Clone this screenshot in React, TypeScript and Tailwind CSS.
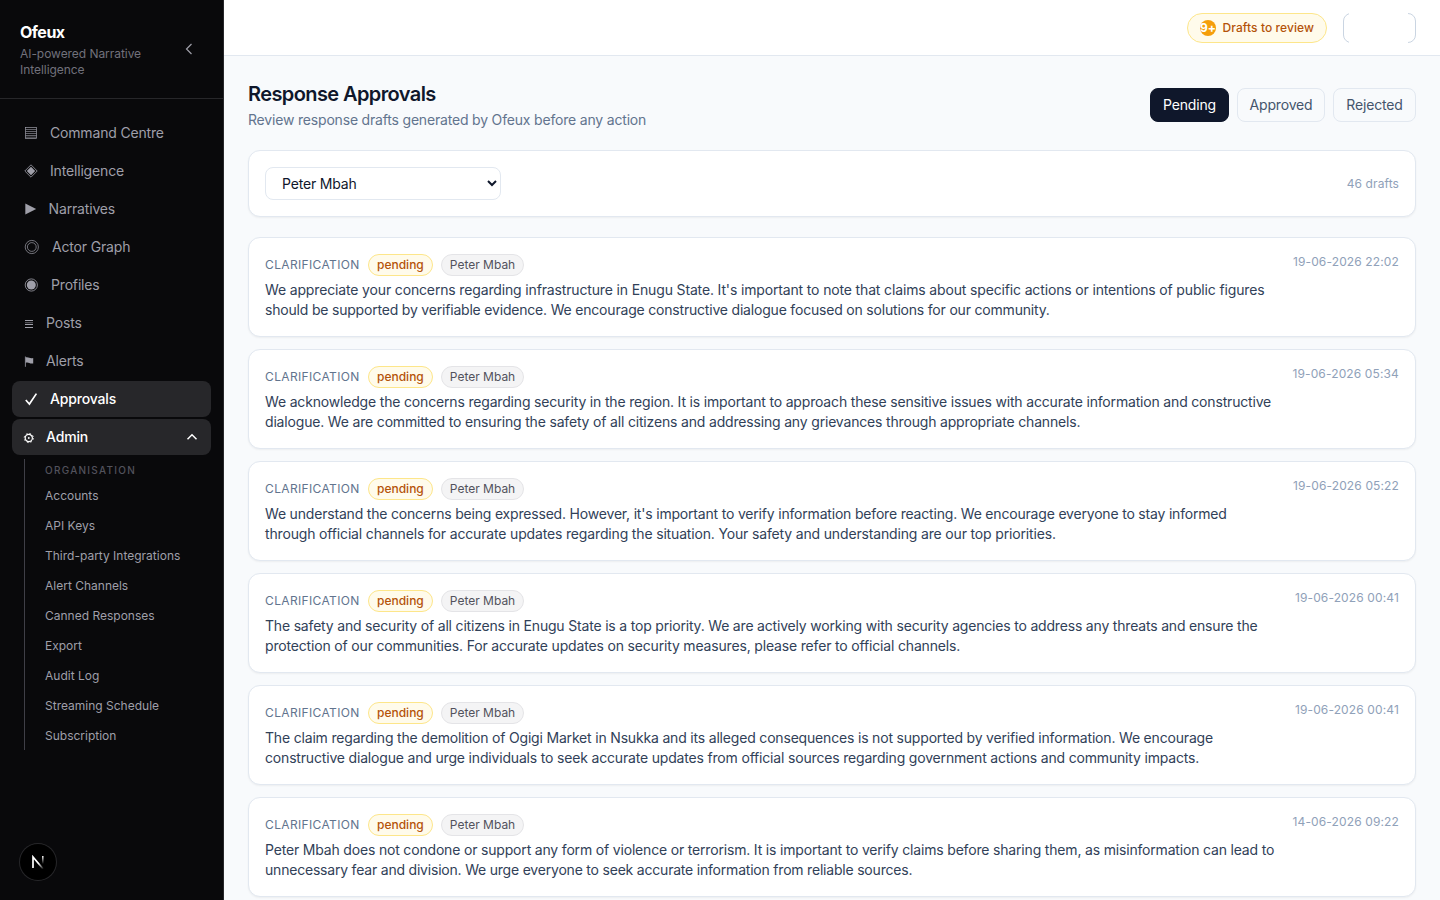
import type { ReactNode } from "react";

const navItems: { label: string; icon: ReactNode; active?: boolean }[] = [
  {
    label: "Command Centre",
    icon: (
      <svg width="14" height="14" viewBox="0 0 14 14" fill="none" stroke="currentColor">
        <rect x="1.5" y="1.5" width="11" height="11" strokeWidth="0.7" />
        <path d="M1.5 3.5h11M1.5 5.5h11M1.5 7.5h11M1.5 9.5h11M1.5 11.2h11" strokeWidth="0.6" />
      </svg>
    ),
  },
  {
    label: "Intelligence",
    icon: (
      <svg width="14" height="14" viewBox="0 0 14 14">
        <path d="M7 .8 13.2 7 7 13.2.8 7z" fill="none" stroke="currentColor" strokeWidth="0.8" />
        <path d="M7 2.8 11.2 7 7 11.2 2.8 7z" fill="currentColor" />
      </svg>
    ),
  },
  {
    label: "Narratives",
    icon: (
      <svg width="12.6" height="14" viewBox="0 0 12.6 14">
        <path d="M1.3 1.5 12.2 7 1.3 12.5z" fill="currentColor" />
      </svg>
    ),
  },
  {
    label: "Actor Graph",
    icon: (
      <svg width="16" height="16" viewBox="0 0 16 16" fill="none" stroke="currentColor" strokeWidth="0.7">
        <circle cx="7.8" cy="8" r="6.6" />
        <circle cx="7.8" cy="8" r="4.4" />
      </svg>
    ),
  },
  {
    label: "Profiles",
    icon: (
      <svg width="15" height="14" viewBox="0 0 15 14">
        <circle cx="7.3" cy="7" r="6.1" fill="none" stroke="currentColor" strokeWidth="0.8" />
        <circle cx="7.3" cy="7" r="4.5" fill="currentColor" />
      </svg>
    ),
  },
  {
    label: "Posts",
    icon: (
      <svg width="10" height="14" viewBox="0 0 10 14" stroke="currentColor">
        <path d="M1 4.5h8M1 8.5h8M1 11.5h8" strokeWidth="1" />
        <path d="M1 6.7h8" strokeWidth="0.6" />
      </svg>
    ),
  },
  {
    label: "Alerts",
    icon: (
      <svg width="10" height="14" viewBox="0 0 10 14">
        <path d="M1.4 2.5v10.3" stroke="currentColor" strokeWidth="0.8" />
        <path d="M1.6 3.3c1.6-.4 2.600 0 3.700.5 1.200.5 2.300.5 3.900.2v5.400c-1.500.3-2.700.2-3.900-.4-1.100-.5-2.100-.7-3.700-.3z" fill="currentColor" />
      </svg>
    ),
  },
  {
    label: "Approvals",
    active: true,
    icon: (
      <svg width="14" height="14" viewBox="0 0 14 14" fill="none" stroke="currentColor">
        <path d="M1.8 8 5.4 12 12.400 1.600" strokeWidth="1.700" />
      </svg>
    ),
  },
];

const adminItems = [
  "Accounts",
  "API Keys",
  "Third-party Integrations",
  "Alert Channels",
  "Canned Responses",
  "Export",
  "Audit Log",
  "Streaming Schedule",
  "Subscription",
];

const drafts = [
  {
    date: "19-06-2026 22:02",
    lines: [
      { text: "We appreciate your concerns regarding infrastructure in Enugu State. It's important to note that claims about specific actions or intentions of public figures", spacing: "tracking-[-0.15px]" },
      { text: "should be supported by verifiable evidence. We encourage constructive dialogue focused on solutions for our community.", spacing: "tracking-[-0.195px]" },
    ],
  },
  {
    date: "19-06-2026 05:34",
    lines: [
      { text: "We acknowledge the concerns regarding security in the region. It is important to approach these sensitive issues with accurate information and constructive", spacing: "tracking-[-0.175px]" },
      { text: "dialogue. We are committed to ensuring the safety of all citizens and addressing any grievances through appropriate channels.", spacing: "tracking-[-0.175px]" },
    ],
  },
  {
    date: "19-06-2026 05:22",
    lines: [
      { text: "We understand the concerns being expressed. However, it's important to verify information before reacting. We encourage everyone to stay informed", spacing: "tracking-[-0.19px]" },
      { text: "through official channels for accurate updates regarding the situation. Your safety and understanding are our top priorities.", spacing: "tracking-[-0.16px]" },
    ],
  },
  {
    date: "19-06-2026 00:41",
    lines: [
      { text: "The safety and security of all citizens in Enugu State is a top priority. We are actively working with security agencies to address any threats and ensure the", spacing: "tracking-[-0.187px]" },
      { text: "protection of our communities. For accurate updates on security measures, please refer to official channels.", spacing: "tracking-[-0.17px]" },
    ],
  },
  {
    date: "19-06-2026 00:41",
    lines: [
      { text: "The claim regarding the demolition of Ogigi Market in Nsukka and its alleged consequences is not supported by verified information. We encourage", spacing: "tracking-[-0.183px]" },
      { text: "constructive dialogue and urge individuals to seek accurate updates from official sources regarding government actions and community impacts.", spacing: "tracking-[-0.177px]" },
    ],
  },
  {
    date: "14-06-2026 09:22",
    lines: [
      { text: "Peter Mbah does not condone or support any form of violence or terrorism. It is important to verify claims before sharing them, as misinformation can lead to", spacing: "tracking-[-0.178px]" },
      { text: "unnecessary fear and division. We urge everyone to seek accurate information from reliable sources.", spacing: "tracking-[-0.205px]" },
    ],
  },
];

const Sidebar = () => {
  return (
    <aside className="relative w-56 shrink-0 bg-[#09090b] border-r border-zinc-800">
      <div className="flex items-center justify-between border-b border-zinc-800 p-5">
        <div className="w-36">
          <p className="text-base font-bold tracking-[-0.5px] text-white">Ofeux</p>
          <p className="mt-0.5 text-xs tracking-[-0.05px] text-zinc-500">
            AI-powered Narrative
            <br />
            Intelligence
          </p>
        </div>
        <svg className="mr-[7px] text-zinc-400" width="14" height="14" viewBox="0 0 14 14" fill="none" stroke="currentColor" strokeWidth="1.2">
          <path d="M9.500 2 4.500 7l5 5" />
        </svg>
      </div>
      <nav className="flex flex-col gap-0.5 px-3 pt-4 tracking-[-0.17px]">
        {navItems.map((item) => (
          <a
            key={item.label}
            className={
              item.active
                ? "flex h-9 items-center gap-3 rounded-lg bg-zinc-800 px-3 text-sm font-medium text-white"
                : "flex h-9 items-center gap-3 rounded-lg px-3 text-sm text-zinc-400"
            }
          >
            {item.icon}
            {item.label}
          </a>
        ))}
        <a className="flex h-9 items-center gap-3 rounded-lg bg-zinc-800 px-3 text-sm font-medium text-white">
          <svg width="10" height="14" viewBox="0 0 10 14" fill="none" stroke="currentColor" overflow="visible">
            <circle cx="4.800" cy="8" r="3.600" strokeWidth="1.200" />
            <circle cx="4.800" cy="8" r="4.600" strokeWidth="0.800" strokeDasharray="1.800 1.812" />
            <circle cx="4.800" cy="8" r="0.900" fill="currentColor" stroke="none" />
          </svg>
          <span className="flex-1">Admin</span>
          <svg width="14" height="14" viewBox="0 0 14 14" fill="none" stroke="currentColor" strokeWidth="1.500">
            <path d="M2.500 9.200 7 4.800l4.500 4.400" />
          </svg>
        </a>
        <div className="ml-3 mt-0.5 flex flex-col gap-0.5 border-l border-zinc-700 pl-5">
          <p className="h-[21px] pt-1 text-[10px] font-medium leading-[15px] tracking-[1.270px] text-zinc-600">
            ORGANISATION
          </p>
          {adminItems.map((item) => (
            <a key={item} className="py-1.5 text-xs tracking-normal text-zinc-400">
              {item}
            </a>
          ))}
        </div>
      </nav>
      {/* dev tools badge */}
      <div className="absolute bottom-5 left-5 flex size-9 items-center justify-center rounded-full bg-black shadow-[0_0_0_1px_#27272a]">
        <svg width="14" height="14" viewBox="0 0 14 14" fill="none">
          <defs>
            <linearGradient id="stem" x1="0" y1="1" x2="0" y2="9" gradientUnits="userSpaceOnUse">
              <stop stopColor="#fff" />
              <stop offset="1" stopColor="#fff" stopOpacity="0" />
            </linearGradient>
            <linearGradient id="slash" x1="8" y1="8" x2="12.500" y2="14" gradientUnits="userSpaceOnUse">
              <stop stopColor="#fff" />
              <stop offset="1" stopColor="#fff" stopOpacity="0" />
            </linearGradient>
          </defs>
          <path d="M2 13V2L12.200 14" stroke="url(#slash)" strokeWidth="1.700" />
          <path d="M11.800 1v8.500" stroke="url(#stem)" strokeWidth="1.500" />
        </svg>
      </div>
    </aside>
  );
};

const App = () => {
  return (
    <div className="flex h-screen overflow-hidden bg-slate-50 font-['Inter',sans-serif]">
      <Sidebar />
      <div className="flex min-w-0 flex-1 flex-col">
        <header className="flex h-14 shrink-0 items-center justify-end gap-4 border-b border-slate-200 bg-white px-6">
          <div className="flex h-[30px] w-[140px] items-center gap-[6.5px] whitespace-nowrap rounded-full border border-[#fde68a] bg-[#fffbeb] px-3 text-xs font-medium tracking-[0.08px] text-[#b45309]">
            <span className="flex size-4 shrink-0 items-center justify-center rounded-full bg-[#f59e0b] font-bold text-white">
              9+
            </span>
            Drafts to review
          </div>
          <div className="relative h-[30px] w-[73px] rounded-lg border border-slate-300">
            <div className="absolute -inset-y-px left-[5px] right-[7px] bg-white" />
          </div>
        </header>
        <main className="flex flex-1 flex-col gap-5 p-6">
          <div className="flex items-center justify-between">
            <div>
              <h1 className="text-xl font-semibold tracking-[-0.6px] text-slate-900">Response Approvals</h1>
              <p className="mt-0.5 text-sm tracking-[-0.185px] text-slate-500">
                Review response drafts generated by Ofeux before any action
              </p>
            </div>
            <div className="flex gap-2 text-sm tracking-[-0.18px]">
              <button className="w-[79px] rounded-lg border border-slate-900 bg-slate-900 py-1.5 text-white">Pending</button>
              <button className="w-[88px] rounded-lg border border-slate-200 py-1.5 text-slate-600">Approved</button>
              <button className="w-[83px] rounded-lg border border-slate-200 py-1.5 text-slate-600">Rejected</button>
            </div>
          </div>
          <div className="flex items-center justify-between rounded-xl border border-slate-200 bg-white p-4 shadow-xs">
            <select className="h-[33px] w-[236px] rounded-lg border border-slate-200 bg-white px-3 text-sm tracking-[-0.18px] text-slate-900">
              <option>Peter Mbah</option>
            </select>
            <span className="text-xs tracking-[0.1px] text-slate-400">46 drafts</span>
          </div>
          <div className="flex flex-col gap-3">
            {drafts.map((draft, i) => (
              <div key={i} className="flex items-start justify-between rounded-xl border border-slate-200 bg-white p-4 shadow-xs">
                <div>
                  <div className="mb-1 flex items-center gap-2 text-xs">
                    <span className="w-[95px] uppercase tracking-[0.36px] text-slate-500">Clarification</span>
                    <span className="rounded-full border border-[#fde68a] bg-[#fffbeb] px-2 py-0.5 font-medium text-[#b45309]">
                      pending
                    </span>
                    <span className="rounded-full border border-zinc-200 bg-zinc-100 px-2 py-0.5 text-zinc-600">
                      Peter Mbah
                    </span>
                  </div>
                  {draft.lines.map((line) => (
                    <p key={line.text} className={`whitespace-nowrap text-sm text-slate-700 ${line.spacing}`}>
                      {line.text}
                    </p>
                  ))}
                </div>
                <span className="whitespace-nowrap text-xs tracking-[0.13px] text-slate-400">{draft.date}</span>
              </div>
            ))}
          </div>
        </main>
      </div>
    </div>
  );
};

export default App;
